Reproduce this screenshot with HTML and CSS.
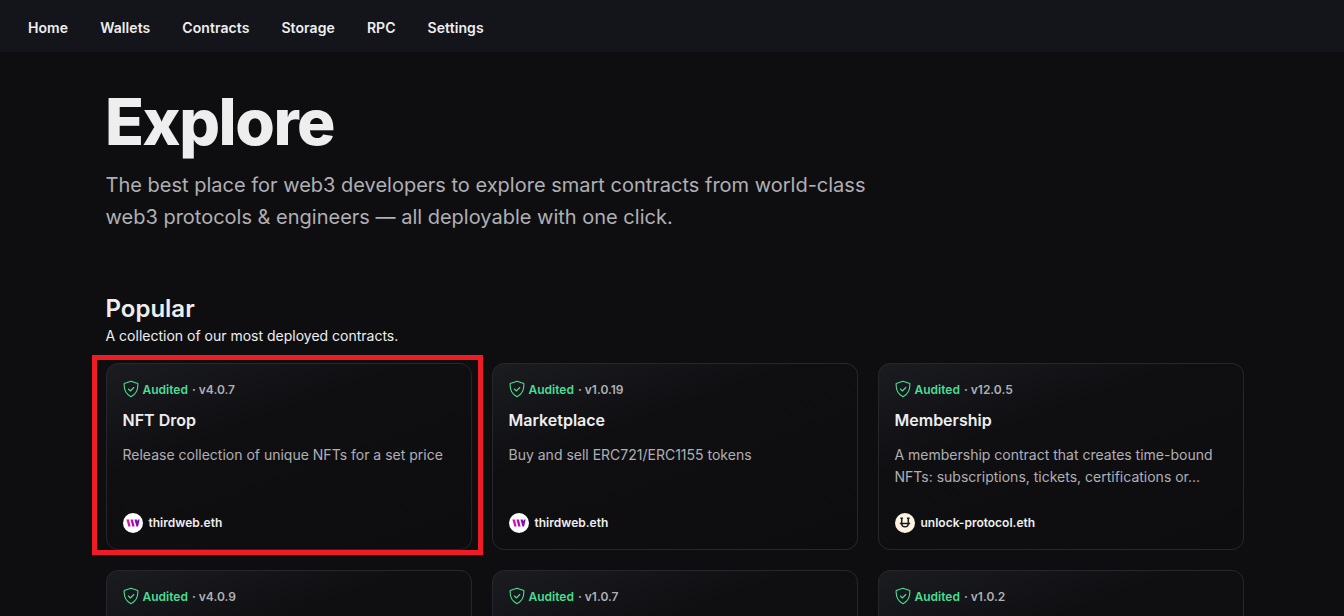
FILE: index.html
```html
<!DOCTYPE html>
<html lang="en">

<head>
    <meta charset="UTF-8">
    <meta name="viewport" content="width=device-width, initial-scale=1.0">
    <title>Explore</title>
    <link rel="stylesheet" href="styles.css">
</head>

<body>
    <svg class="icon-defs" width="0" height="0" aria-hidden="true">
        <defs>
            <linearGradient id="tw-grad" x1="0" y1="0" x2="1" y2="0">
                <stop offset="0" stop-color="#f213a4" />
                <stop offset="1" stop-color="#6a08c4" />
            </linearGradient>
        </defs>
        <symbol id="shield" viewBox="0 0 16 18">
            <path d="M8 1.200 14.800 3.400c.4 5.200-.5 10.300-6.800 13.400C1.700 13.700.8 8.600 1.200 3.400Z" fill="none" stroke="currentColor" stroke-width="1.100" stroke-linejoin="round" />
            <path d="m5.400 9 2 2 3.400-3.500" fill="none" stroke="currentColor" stroke-width="1.100" stroke-linecap="round" stroke-linejoin="round" />
        </symbol>
        <symbol id="thirdweb" viewBox="0 0 20 20">
            <circle cx="10" cy="10" r="10" fill="#fff" />
            <path d="M3.400 6.500h2.500l1.700 7H5.300Z M7.400 6.500h2.500l1.700 7H9.300Z M11.400 6.500h2.300l.9 1.600.6-1.600h1.400l-1.500 7h-1.700Z" fill="url(#tw-grad)" />
        </symbol>
        <symbol id="unlock" viewBox="0 0 20 20">
            <circle cx="10" cy="10" r="10" fill="#fdf3e3" />
            <path d="M6.700 5v5.500a3.300 3.300 0 0 0 6.600 0V5M5.400 5.200h2.600M12 5.200h2.600M4.800 10.400h10.400" fill="none" stroke="#1a1a1a" stroke-width="1.500" />
        </symbol>
    </svg>

    <nav class="topnav">
        <a href="#">Home</a>
        <a href="#">Wallets</a>
        <a href="#">Contracts</a>
        <a href="#">Storage</a>
        <a href="#">RPC</a>
        <a href="#">Settings</a>
    </nav>

    <main class="container">
        <h1>Explore</h1>
        <p class="lead">The best place for web3 developers to explore smart contracts from world-class web3 protocols &amp; engineers — all deployable with one click.</p>

        <h2>Popular</h2>
        <p class="subhead">A collection of our most deployed contracts.</p>

        <div class="card-grid">
            <div class="card card-marked">
                <div class="meta"><svg class="shield"><use href="#shield" /></svg><span class="audited">Audited</span><span class="version">· v4.0.7</span></div>
                <h3>NFT Drop</h3>
                <p class="desc">Release collection of unique NFTs for a set price</p>
                <div class="author"><svg class="avatar"><use href="#thirdweb" /></svg>thirdweb.eth</div>
            </div>
            <div class="card">
                <div class="meta"><svg class="shield"><use href="#shield" /></svg><span class="audited">Audited</span><span class="version">· v1.0.19</span></div>
                <h3>Marketplace</h3>
                <p class="desc">Buy and sell ERC721/ERC1155 tokens</p>
                <div class="author"><svg class="avatar"><use href="#thirdweb" /></svg>thirdweb.eth</div>
            </div>
            <div class="card">
                <div class="meta"><svg class="shield"><use href="#shield" /></svg><span class="audited">Audited</span><span class="version">· v12.0.5</span></div>
                <h3>Membership</h3>
                <p class="desc">A membership contract that creates time-bound NFTs: subscriptions, tickets, certifications or...</p>
                <div class="author"><svg class="avatar"><use href="#unlock" /></svg>unlock-protocol.eth</div>
            </div>
            <div class="card">
                <div class="meta"><svg class="shield"><use href="#shield" /></svg><span class="audited">Audited</span><span class="version">· v4.0.9</span></div>
            </div>
            <div class="card">
                <div class="meta"><svg class="shield"><use href="#shield" /></svg><span class="audited">Audited</span><span class="version">· v1.0.7</span></div>
            </div>
            <div class="card">
                <div class="meta"><svg class="shield"><use href="#shield" /></svg><span class="audited">Audited</span><span class="version">· v1.0.2</span></div>
            </div>
        </div>
    </main>
</body>

</html>
```

FILE: styles.css
```css
html {
    overflow: hidden;
}

body {
    font-family: Inter, 'Noto Sans', sans-serif;
    margin: 0;
    height: 616px;
    overflow: hidden;
    background-color: #0e0e11;
    color: #eeeeef;
}

.icon-defs {
    position: absolute;
}

.topnav {
    display: flex;
    align-items: center;
    gap: 32px;
    height: 52px;
    padding: 2px 28px 0;
    box-sizing: border-box;
    background: #14151a;
}

.topnav a {
    color: #eeeeef;
    text-decoration: none;
    font-size: 14px;
    font-weight: 600;
    letter-spacing: 0.07px;
}

.container {
    width: 1138px;
    margin-left: 106px;
}

h1 {
    font-size: 64px;
    line-height: 70px;
    font-weight: 800;
    letter-spacing: -1.45px;
    margin: 35px 0 0 -1px;
}

.lead {
    width: 800px;
    color: #b0b0b4;
    font-size: 20px;
    line-height: 32px;
    margin: 12px 0 0 -0.5px;
}

h2 {
    font-size: 24px;
    line-height: 30px;
    font-weight: 600;
    margin: 61px 0 0 -0.5px;
}

.subhead {
    font-size: 14px;
    line-height: 20px;
    margin: 2px 0 0 -0.5px;
}

.card-grid {
    display: grid;
    grid-template-columns: repeat(3, 366px);
    grid-auto-rows: 187px;
    gap: 20px;
    margin-top: 17px;
}

.card {
    position: relative;
    display: flex;
    flex-direction: column;
    box-sizing: border-box;
    padding: 16px 16px 16px 15.5px;
    border: 1px solid #26272c;
    border-radius: 12px;
    background: linear-gradient(160deg, #1b1c20 0%, #0f0f12 35%, #0d0d10 100%);
}

/* red annotation box from the screenshot */
.card-marked::after {
    content: "";
    position: absolute;
    top: -9px;
    left: -15px;
    right: -12px;
    bottom: -6px;
    border: 5px solid #ee1c25;
}

.meta {
    display: flex;
    align-items: center;
    height: 18px;
    font-size: 12px;
    font-weight: 600;
}

.shield {
    width: 16px;
    height: 18px;
    margin-right: 4px;
    color: #4ade94;
}

.audited {
    color: #4ade94;
    margin-right: 4px;
}

.version {
    color: #b0b0b4;
}

h3 {
    font-size: 16px;
    line-height: 24px;
    font-weight: 600;
    margin: 10px 0 0;
}

.desc {
    color: #b0b0b4;
    font-size: 14px;
    line-height: 22px;
    margin: 12px 0 0;
}

.author {
    display: flex;
    align-items: center;
    gap: 6px;
    margin-top: auto;
    font-size: 12px;
    font-weight: 600;
    line-height: 20px;
}

.avatar {
    width: 20px;
    height: 20px;
}
```
